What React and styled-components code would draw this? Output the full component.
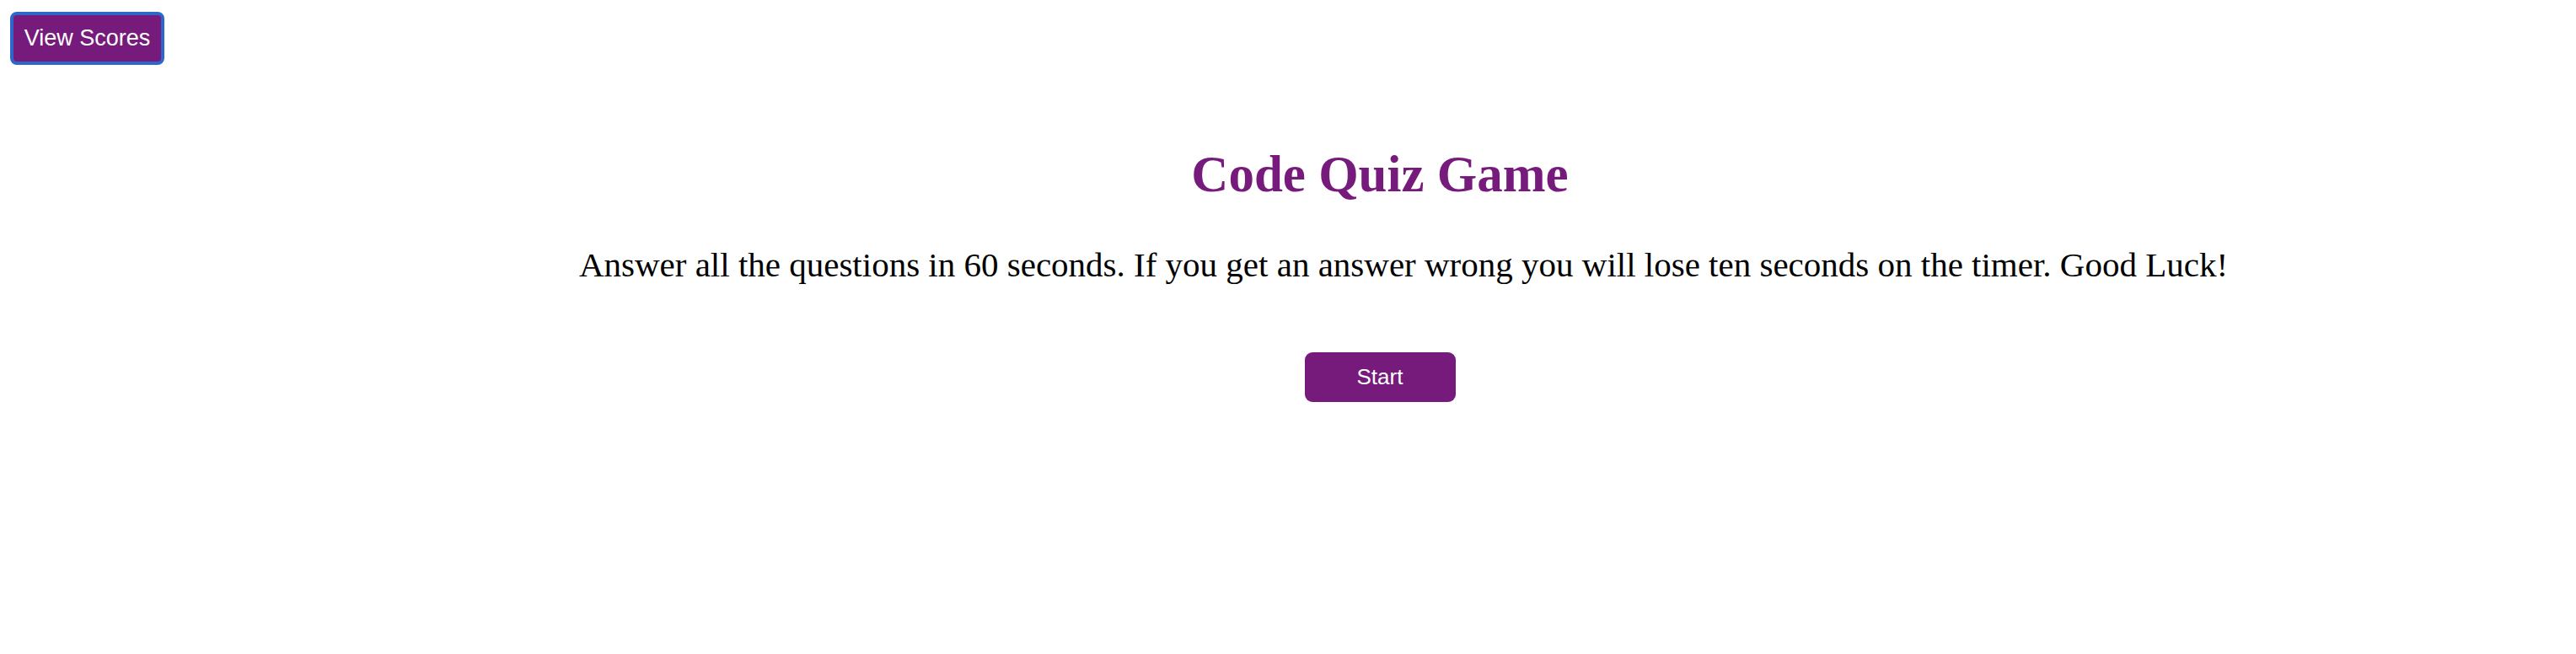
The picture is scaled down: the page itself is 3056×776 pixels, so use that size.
import React from 'react';
import styled, { createGlobalStyle } from 'styled-components';

const purple = '#761b7b';

const GlobalStyle = createGlobalStyle`
  html, body {
    margin: 0;
    padding: 0;
    background: #fff;
  }
  body {
    font-family: "Liberation Serif", "Times New Roman", serif;
  }
`;

const Page = styled.div`
  display: flex;
  align-items: flex-start;
  width: 3056px;
  min-height: 776px;
  box-sizing: border-box;
  padding: 14px 0 0 12px;
`;

const ScoresButton = styled.button`
  flex: none;
  width: 183px;
  height: 63px;
  margin-right: 23px;
  box-sizing: border-box;
  background: ${purple};
  color: #fff;
  border: 4px solid #2c67c9;
  border-radius: 8px;
  font-family: "Liberation Sans", Arial, sans-serif;
  font-size: 27px;
  padding: 0;
  cursor: pointer;
`;

const Main = styled.main`
  flex: 1;
  display: flex;
  flex-direction: column;
  align-items: center;
  text-align: center;
`;

const Title = styled.h1`
  margin: 156px 0 0;
  color: ${purple};
  font-size: 61px;
  font-weight: bold;
  line-height: 73px;
`;

const Intro = styled.p`
  margin: 48px 0 0;
  padding-left: 56px;
  color: #000;
  font-size: 41px;
  line-height: 47px;
  white-space: nowrap;
`;

const StartButton = styled.button`
  width: 179px;
  height: 59px;
  margin-top: 80px;
  background: ${purple};
  color: #fff;
  border: none;
  border-radius: 9px;
  font-family: "Liberation Sans", Arial, sans-serif;
  font-size: 26px;
  cursor: pointer;
`;

export default function App() {
  return (
    <>
      <GlobalStyle />
      <Page>
        <ScoresButton>View Scores</ScoresButton>
        <Main>
          <Title>Code Quiz Game</Title>
          <Intro>
            Answer all the questions in 60 seconds. If you get an answer wrong you will lose ten seconds on the timer. Good Luck!
          </Intro>
          <StartButton>Start</StartButton>
        </Main>
      </Page>
    </>
  );
}
